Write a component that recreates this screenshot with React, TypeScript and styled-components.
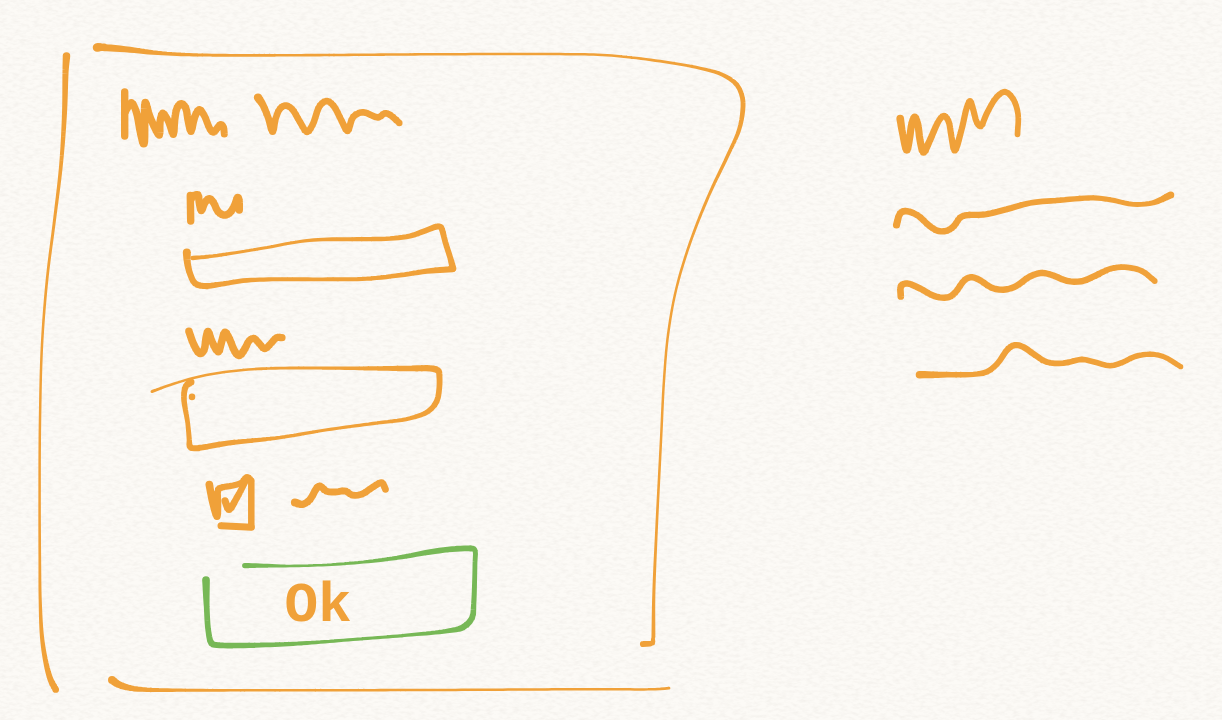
import React from "react";
import styled, { createGlobalStyle } from "styled-components";

const ORANGE = "#f0a139";
const GREEN = "#77b856";
const PAPER = "#fcfaf6";

const GlobalStyle = createGlobalStyle`
  *, *::before, *::after { box-sizing: border-box; }
  body {
    margin: 0;
    background: ${PAPER};
    color: ${ORANGE};
    font-family: "Liberation Mono", monospace;
  }
`;

/* ---------- ink: pen strokes whose width changes along the way ---------- */

type Point = [x: number, y: number, width: number];

/* Reads "x,y,width" triples; a missing width repeats the one before it. */
function parseStroke(data: string): Point[] {
  let width = 6;
  return data
    .trim()
    .split(/\s+/)
    .map((item) => {
      const [x, y, w] = item.split(",").map(Number);
      if (w) width = w;
      return [x, y, width] as Point;
    });
}

/* Smooths the points with a centripetal Catmull-Rom curve. */
function smooth(points: Point[]): Point[] {
  if (points.length < 3) return points;
  const out: Point[] = [points[0]];
  const mirror = (a: Point, b: Point): Point => [2 * a[0] - b[0], 2 * a[1] - b[1], a[2]];
  for (let i = 0; i < points.length - 1; i++) {
    const p1 = points[i];
    const p2 = points[i + 1];
    const p0 = points[i - 1] ?? mirror(p1, p2);
    const p3 = points[i + 2] ?? mirror(p2, p1);
    const knot = (a: Point, b: Point) => Math.max(Math.sqrt(Math.hypot(b[0] - a[0], b[1] - a[1])), 0.01);
    const t1 = knot(p0, p1);
    const t2 = t1 + knot(p1, p2);
    const t3 = t2 + knot(p2, p3);
    const steps = Math.max(3, Math.ceil(Math.hypot(p2[0] - p1[0], p2[1] - p1[1]) / 5));
    for (let s = 1; s <= steps; s++) {
      const t = t1 + ((t2 - t1) * s) / steps;
      const at = (k: 0 | 1) => {
        const a1 = ((t1 - t) * p0[k] + t * p1[k]) / t1;
        const a2 = ((t2 - t) * p1[k] + (t - t1) * p2[k]) / (t2 - t1);
        const a3 = ((t3 - t) * p2[k] + (t - t2) * p3[k]) / (t3 - t2);
        const b1 = ((t2 - t) * a1 + t * a2) / t2;
        const b2 = ((t3 - t) * a2 + (t - t1) * a3) / (t3 - t1);
        return ((t2 - t) * b1 + (t - t1) * b2) / (t2 - t1);
      };
      out.push([at(0), at(1), p1[2] + ((p2[2] - p1[2]) * s) / steps]);
    }
  }
  return out;
}

/* Joins a round nib at each point and a tapered band between neighbours into one filled shape. */
function inkShape(points: Point[]): string {
  const n = (v: number) => v.toFixed(2);
  const parts: string[] = [];
  points.forEach(([x, y, w], i) => {
    const r = w / 2;
    parts.push(
      `M${n(x - r)} ${n(y)}a${n(r)} ${n(r)} 0 1 0 ${n(w)} 0a${n(r)} ${n(r)} 0 1 0 ${n(-w)} 0z`
    );
    const next = points[i + 1];
    if (!next) return;
    const dx = next[0] - x;
    const dy = next[1] - y;
    const len = Math.hypot(dx, dy);
    if (len < 0.01) return;
    const nx = -dy / len;
    const ny = dx / len;
    const q = next[2] / 2;
    parts.push(
      `M${n(x + nx * r)} ${n(y + ny * r)}L${n(next[0] + nx * q)} ${n(next[1] + ny * q)}` +
        `L${n(next[0] - nx * q)} ${n(next[1] - ny * q)}L${n(x - nx * r)} ${n(y - ny * r)}z`
    );
  });
  return parts.join("");
}

function Ink({ d, className }: { d: string; className?: string }) {
  return <path className={className} fill="currentColor" d={inkShape(smooth(parseStroke(d)))} />;
}

const DoodleSvg = styled.svg`
  display: block;
  flex: none;
  overflow: visible;
`;

/* All drawings share the coordinates of one sheet; box is the part of it shown. */
type Box = [x: number, y: number, width: number, height: number];

function Doodle({ box, strokes }: { box: Box; strokes: string[] }) {
  return (
    <DoodleSvg viewBox={box.join(" ")} width={box[2]} height={box[3]} aria-hidden="true">
      {strokes.map((d, i) => (
        <Ink key={i} d={d} />
      ))}
    </DoodleSvg>
  );
}

const frame = [
  "97,47.5,8.5 100,47.2,8 107,47.7,7 130,49.7,6 153,52.5,4.5 177,54.2,3.6 217,55.2,2.9 297,55.2,2.6 430,54.3,2.5 560,54.1,2.5 607,55.2,2.5 660,61.2,2.7 700,68.2,3.1 723,75,4 737,85,4.7 742.5,98,4.9 742.7,111,4.8 739,130,4.2 727,157,3.5 709,195,3 690,243,2.7 676,290,2.5 668,335,2.5 664,380,2.5 661,440,2.5 656.5,530,2.7 653.8,595,3.1 653.4,637,3.9",
  "653,639,4 652.5,643,5 643,644,6.2",
  "66.5,56,7.5 65.6,70,6.2 64.5,113,5 61,165,3.7 54.5,220,3 47,280,2.7 42,345,2.5 40,420,2.5 39.6,500,2.5 39.8,560,2.7 40.2,600,3.1 42,637,4.1 46,663,5.1 50.7,680,6 55.7,689.5,6.7",
  "112,680,8 118.3,684.3,7.2 130,688,5.8 147,689.7,4.6 177,690.2,3.3 230,690.3,2.6 430,690,2.5 590,689.2,2.5 655,689.2,2.5 669,688.2,2.8",
];

const title = [
  "124.7,92,7.4 124.7,136",
  "126.5,112,5 131.3,102.5,7.2 136,111,7.4 140.7,133,7.8 143.7,143.5,8.2 144.6,120,7.8 145.3,102.5,7.6 150,117,7.4 159.3,135 160,122 162.7,113,7 168.3,121 173.3,134.2,7.4 174.7,120 177.3,107.5 181.3,103.7 185.5,107.5 188,120 191,131.2 194.7,117 199.3,109.7 204,115,7 210,129 213.3,132.2 217.3,128 220.7,124.4 223.3,127 224.3,134",
  "258,97.6,8.4 262.7,104.5,7.2 268.3,118,6.8 272.6,131.2,7.4 275.5,119,6.6 280,108.7 285.3,105.5 291.7,108.7 300,122 307,132 312.5,125 320,105.5 326.7,101 333.3,105.5 341.7,121 347.5,131 353.3,116.7 363,112.2 378.3,117.5 385,113.2 390,114.9 399.3,122.9,6.5",
];

const nameLabel = [
  "190.3,195.5,7.4 190.7,221",
  "192,199,6 193,196,6.5 197.7,194.8,7.5 199.3,203,7.4 201.3,210.5 205,202.5 209.3,198.7 213.3,202.2 218,211.5 224,215.1 229.3,213.3 234.3,206 237.7,197.4,7.4 239,200 239.3,210",
];

const nameOutline = [
  "186.8,252.5,8 187.4,263,6.8 190.5,275,6.2 195,283.3 203.3,286 220,284.3,5.2 243,280.7,4.7 273,279.3,4 323,279.3,3.8 366.7,278.7,4.2 400,275.2,4.7 427,271.2,5.2 452.5,269,6.5",
  "453,268.3,6.8 450.3,258,5.8 445.3,242 442,229.5,6 440.5,227 437,226.5,6 425,230.8,5.7 410,236,5.2 390,238.5,4.7 357,239.2,4.2 323,239.5,3.6 300,241.5,3.1 267,247.5,3 240,252,3.1 213,256,3.6 192.7,258,4.6",
];

const detailLabel = [
  "188.9,331.3,7.5 194,345 200,353.6 204,350 206,338 208,331.4 211.7,341 218.3,351.8 221.3,343 225,332.2 229.5,339 235,351.8 239.3,355.6 245,348.5 249.3,340.5,7 254,338.3 259.3,343.5 264.7,348.7 271.7,342.5 276.7,337.5 282,337.7,7.2",
];

const detailOutline = [
  "152,391.5,3 170,385,2.5 193.3,378,2.5 220,372.7,2.5 253,369.2,2.6 290,368,2.9 340,368.2,3.2 373,368.4,4.2 407,368.5,5.7 433.5,368.8,6.4 438.6,371.2,6.2 439.4,376,6 439.3,388,5.7 436.7,401.3 428.3,411.3,5.2 410,418.3,4.2 373,423.5,3.3 327,429.8,3.1 280,437.5,3.6 230,442.8,5.2 192,448,6.2 189.7,446,6.2 189.3,440,5.2 187.7,423,4.7 183.9,397,5.7 186,386,6.2 191,382,7",
  "192,396.7,6.5 192,397",
];

const checkOutline = [
  "209.3,484.5,7.7 212.7,503,7 217,516.3,7.4 217.8,503,7 218.3,489.5,6.6 223,487.2,6.2 233,485.5 241.7,482.7 247,477.5,7.2 251,480.7,6.5",
  "251.3,481,6.5 251.3,527",
  "251.3,527.3,7 221,525.7,7",
];
const checkTick = "225,500.8,7.2 229,509.5 236.7,498,6.6 247,478.5,6";

const checkLabel = [
  "294.9,502.5,8 302.7,504.3,7.2 310,499.5 317,487.7 320,486.2 326.5,491.2,6.8 335,492 345.5,491 352,495 361.7,494.2 373.3,486.8 381.7,482.7 385.5,489.3",
];

const buttonOutline = [
  "244.7,565.6,5.2 260,565.6,4.2 290,566,2.7 327,564.8,2.7 363.5,562,3.2 397,557.8,4.2 430,552,5.5 452,549.1,5.8 468,548.4,5.8 473.5,548.8,5.6 475.2,551,5 475,562,4.8 474.7,577,4.8 473.7,604,5.2 472,618,6 463,627.3,6.2 447,631,4.5 407,635.2,3.3 353,639.5,3 307,643,3.8 270,644.8,4.7 217,645,6 211.5,643.3,6.3 208.5,632,5.7 206.7,607,5.7 206,580,7.7",
];

const asideTitle = [
  "900.2,118.7,7.7 902.7,134,7 906.8,149.8,7.7 909.3,140,7.2 912,123 914.7,117 917.7,124 920,140 923.5,152.2 930,140,6.7 939.3,120,6.2 944,115.8 948.3,120.7 951.5,137 954.7,150.2,6.8 961.7,129,6.2 966.7,108 970,101 973.3,110 977,122.7 980.7,126.2 986.5,114,6 996.7,97 1005,91.7 1013,98.7 1018,114,5.7 1017.5,134.3,5.7",
];

const asideLines: { box: Box; strokes: string[] }[] = [
  {
    box: [888, 188, 298, 50],
    strokes: [
      "896.5,225,7.2 900,213.7,6.7 905,211 917,215,6.4 930,226.3 938.3,231 947,230.7 954,226 960,217.8 966,215.2 983.3,214.7,6.2 1006.7,209.3 1030,203,5.7 1060,200.2 1093.3,197.9,5.2 1110,199.7 1133.3,204.3,4.8 1153.3,202.7,5.2 1170.7,195,7.2",
    ],
  },
  {
    box: [888, 263, 298, 50],
    strokes: [
      "900.8,296.5,6.7 901,286 906.7,283.4,6.4 920,288.5 935,296.3 948.3,297.3 955,292.7 965,279.7 971.7,277.2 980,280.2 991.7,287.8 1003.3,289.7 1015,286.7 1030,276.5 1041.7,272.9 1053.3,275.5 1066.7,280.8 1081.7,281.2 1095,275.9 1110,268.9,5.8 1125,267.2 1141.7,270.9 1154.7,281",
    ],
  },
  {
    box: [888, 338, 298, 50],
    strokes: [
      "919.5,374.7,7.6 947,374.7,5.7 973.3,374.3,5.2 987,371.8,5.8 997,364 1008.3,348.7,6.2 1015,345 1023.3,347 1035,355 1046.7,362,5.8 1063.3,363.2 1081.7,359.4,5.6 1093.3,361.7 1110,365.7 1121.7,362.7 1135,356.5 1150,354.2,5.2 1163.3,356.5 1180.7,366.7",
    ],
  },
];

/* ---------- page ---------- */

const Page = styled.div`
  position: relative;
  min-height: 100vh;
  padding: 40px 36px 24px;
  display: grid;
  grid-template-columns: 712fr 298fr;
  column-gap: 140px;
  align-items: start;
`;

const PaperGrain = styled.svg`
  position: absolute;
  inset: 0;
  width: 100%;
  height: 100%;
  pointer-events: none;
`;

const Panel = styled.main`
  position: relative;
  padding: 44px 82px 46px;
`;

const FrameSvg = styled.svg`
  position: absolute;
  inset: 0;
  width: 100%;
  height: 100%;
  overflow: visible;
  pointer-events: none;
`;

const Heading = styled.h1`
  margin: 0 0 38px;
`;

const Form = styled.form`
  display: flex;
  flex-direction: column;
  align-items: flex-start;
  gap: 18px;
  padding-left: 62px;
`;

const FieldGroup = styled.div<{ $height: number }>`
  display: flex;
  flex-direction: column;
  min-height: ${(p) => p.$height}px;
`;

const FieldLabel = styled.label`
  display: block;
`;

const InputWrap = styled.div`
  position: relative;
`;

const TextInput = styled.input`
  position: absolute;
  inset: 24px 24px 16px 16px;
  min-width: 0;
  padding: 0 8px;
  border: 0;
  outline: 0;
  background: transparent;
  color: inherit;
  font: inherit;
  font-size: 20px;
`;

const CheckRow = styled.label`
  display: flex;
  align-items: flex-start;
  gap: 32px;
  padding-left: 24px;
  cursor: pointer;
`;

const CheckBox = styled.span`
  position: relative;
  display: block;

  .tick { visibility: hidden; }
  input:checked + svg .tick { visibility: visible; }
`;

const CheckInput = styled.input`
  position: absolute;
  inset: 0;
  width: 100%;
  height: 100%;
  margin: 0;
  opacity: 0;
  cursor: pointer;
`;

const OkButton = styled.button`
  position: relative;
  display: block;
  margin-left: 20px;
  padding: 0;
  border: 0;
  background: transparent;
  color: ${GREEN};
  cursor: pointer;
`;

const ButtonText = styled.span`
  position: absolute;
  inset: 32px 44px 14px 0;
  display: flex;
  align-items: center;
  justify-content: center;
  color: ${ORANGE};
  font-family: "Liberation Mono", monospace;
  font-size: 56px;
  font-weight: 700;
  line-height: 60px;
`;

const Aside = styled.aside`
  position: relative;
  padding-top: 44px;
`;

const AsideHeading = styled.h2`
  margin: 0 0 28px;
`;

const NoteList = styled.ul`
  display: flex;
  flex-direction: column;
  gap: 25px;
  margin: 0;
  padding: 0;
  list-style: none;
`;

export default function App() {
  return (
    <Page>
      <GlobalStyle />
      <PaperGrain aria-hidden="true">
        <filter id="grain" x="0" y="0" width="100%" height="100%" colorInterpolationFilters="sRGB">
          <feTurbulence type="fractalNoise" baseFrequency="0.15 0.33" numOctaves="3" seed="7" />
          <feColorMatrix values="0 0 0 0 0.74  0 0 0 0 0.71  0 0 0 0 0.68  0.26 0 0 0 -0.1" />
        </filter>
        <rect width="100%" height="100%" filter="url(#grain)" />
      </PaperGrain>

      <Panel>
        <FrameSvg viewBox="36 40 712 656" preserveAspectRatio="none" aria-hidden="true">
          {frame.map((d, i) => (
            <Ink key={i} d={d} />
          ))}
        </FrameSvg>

        <Heading>
          <Doodle box={[118, 84, 290, 66]} strokes={title} />
        </Heading>

        <Form onSubmit={(e) => e.preventDefault()}>
          <FieldGroup $height={120}>
            <FieldLabel htmlFor="name">
              <Doodle box={[180, 188, 66, 34]} strokes={nameLabel} />
            </FieldLabel>
            <InputWrap>
              <Doodle box={[180, 222, 280, 70]} strokes={nameOutline} />
              <TextInput id="name" type="text" />
            </InputWrap>
          </FieldGroup>

          <FieldGroup $height={128}>
            <FieldLabel htmlFor="detail">
              <Doodle box={[180, 326, 110, 34]} strokes={detailLabel} />
            </FieldLabel>
            <InputWrap>
              <Doodle box={[180, 360, 266, 94]} strokes={detailOutline} />
              <TextInput id="detail" type="text" />
            </InputWrap>
          </FieldGroup>

          <CheckRow>
            <CheckBox>
              <CheckInput type="checkbox" defaultChecked />
              <DoodleSvg viewBox="204 472 52 54" width={52} height={54} aria-hidden="true">
                {checkOutline.map((d, i) => (
                  <Ink key={i} d={d} />
                ))}
                <Ink className="tick" d={checkTick} />
              </DoodleSvg>
            </CheckBox>
            <Doodle box={[288, 472, 104, 54]} strokes={checkLabel} />
          </CheckRow>

          <OkButton type="submit">
            <Doodle box={[200, 544, 280, 106]} strokes={buttonOutline} />
            <ButtonText>Ok</ButtonText>
          </OkButton>
        </Form>
      </Panel>

      <Aside>
        <AsideHeading>
          <Doodle box={[888, 84, 140, 76]} strokes={asideTitle} />
        </AsideHeading>
        <NoteList>
          {asideLines.map((line, i) => (
            <li key={i}>
              <Doodle box={line.box} strokes={line.strokes} />
            </li>
          ))}
        </NoteList>
      </Aside>
    </Page>
  );
}
